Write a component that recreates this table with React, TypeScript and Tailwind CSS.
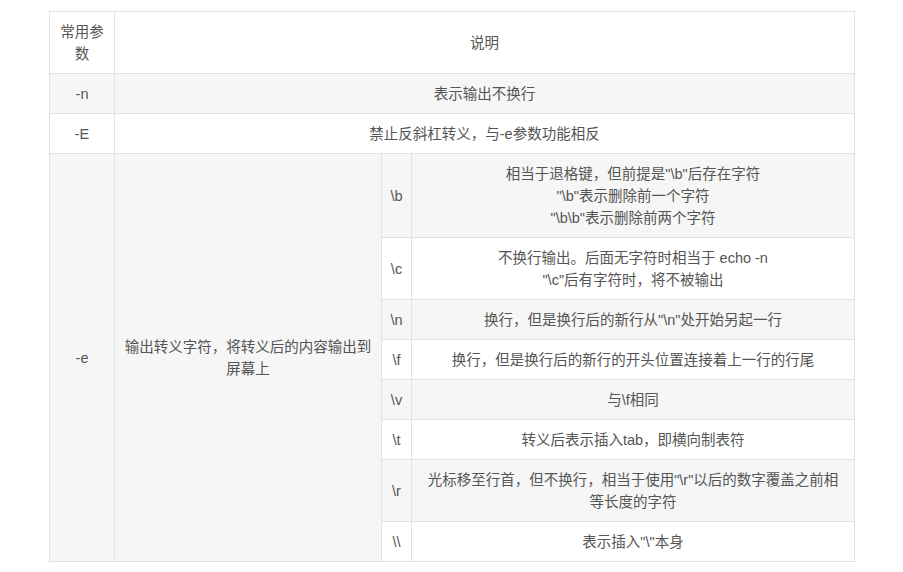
import React from 'react';

// escape-sequence rows for the -e option
const escapes: { code: string; lines: string[] }[] = [
  { code: '\\b', lines: ['相当于退格键，但前提是"\\b"后存在字符', '"\\b"表示删除前一个字符', '"\\b\\b"表示删除前两个字符'] },
  { code: '\\c', lines: ['不换行输出。后面无字符时相当于 echo -n', '"\\c"后有字符时，将不被输出'] },
  { code: '\\n', lines: ['换行，但是换行后的新行从"\\n"处开始另起一行'] },
  { code: '\\f', lines: ['换行，但是换行后的新行的开头位置连接着上一行的行尾'] },
  { code: '\\v', lines: ['与\\f相同'] },
  { code: '\\t', lines: ['转义后表示插入tab，即横向制表符'] },
  { code: '\\r', lines: ['光标移至行首，但不换行，相当于使用"\\r"以后的数字覆盖之前相等长度的字符'] },
  { code: '\\\\', lines: ['表示插入"\\"本身'] },
];

const cell = 'border border-[#e2e2e2] pt-[9px] pb-2 text-center align-middle';
const td = `${cell} px-[10px]`;

const App: React.FC = () => {
  return (
    <div className="w-[903px] h-[572px] bg-white pt-[11px] pl-[49px]">
      <table
        className="table-fixed border-collapse w-[806px] text-[14.5px] leading-[22px] text-[#555]"
        style={{ fontFamily: '"Liberation Sans", "Noto Sans CJK SC", sans-serif' }}
      >
        <colgroup>
          <col className="w-[65px]" />
          <col className="w-[267px]" />
          <col className="w-[30px]" />
          <col />
        </colgroup>
        <tbody>
          <tr className="bg-white">
            <td className={`${cell} px-2`}>常用参数</td>
            <td className={td} colSpan={3}>说明</td>
          </tr>
          <tr className="bg-[#f6f6f6]">
            <td className={td}>-n</td>
            <td className={td} colSpan={3}>表示输出不换行</td>
          </tr>
          <tr className="bg-white">
            <td className={td}>-E</td>
            <td className={td} colSpan={3}>禁止反斜杠转义，与-e参数功能相反</td>
          </tr>
          {escapes.map((row, i) => (
            <tr key={row.code} className={i % 2 === 0 ? 'bg-[#f6f6f6]' : 'bg-white'}>
              {i === 0 && (
                <>
                  <td className={td} rowSpan={escapes.length}>-e</td>
                  <td className={`${cell} px-2`} rowSpan={escapes.length}>输出转义字符，将转义后的内容输出到屏幕上</td>
                </>
              )}
              <td className={`${cell} px-0`}>{row.code}</td>
              <td className={td}>
                {row.lines.map((l) => (
                  <div key={l}>{l}</div>
                ))}
              </td>
            </tr>
          ))}
        </tbody>
      </table>
    </div>
  );
};

export default App;
